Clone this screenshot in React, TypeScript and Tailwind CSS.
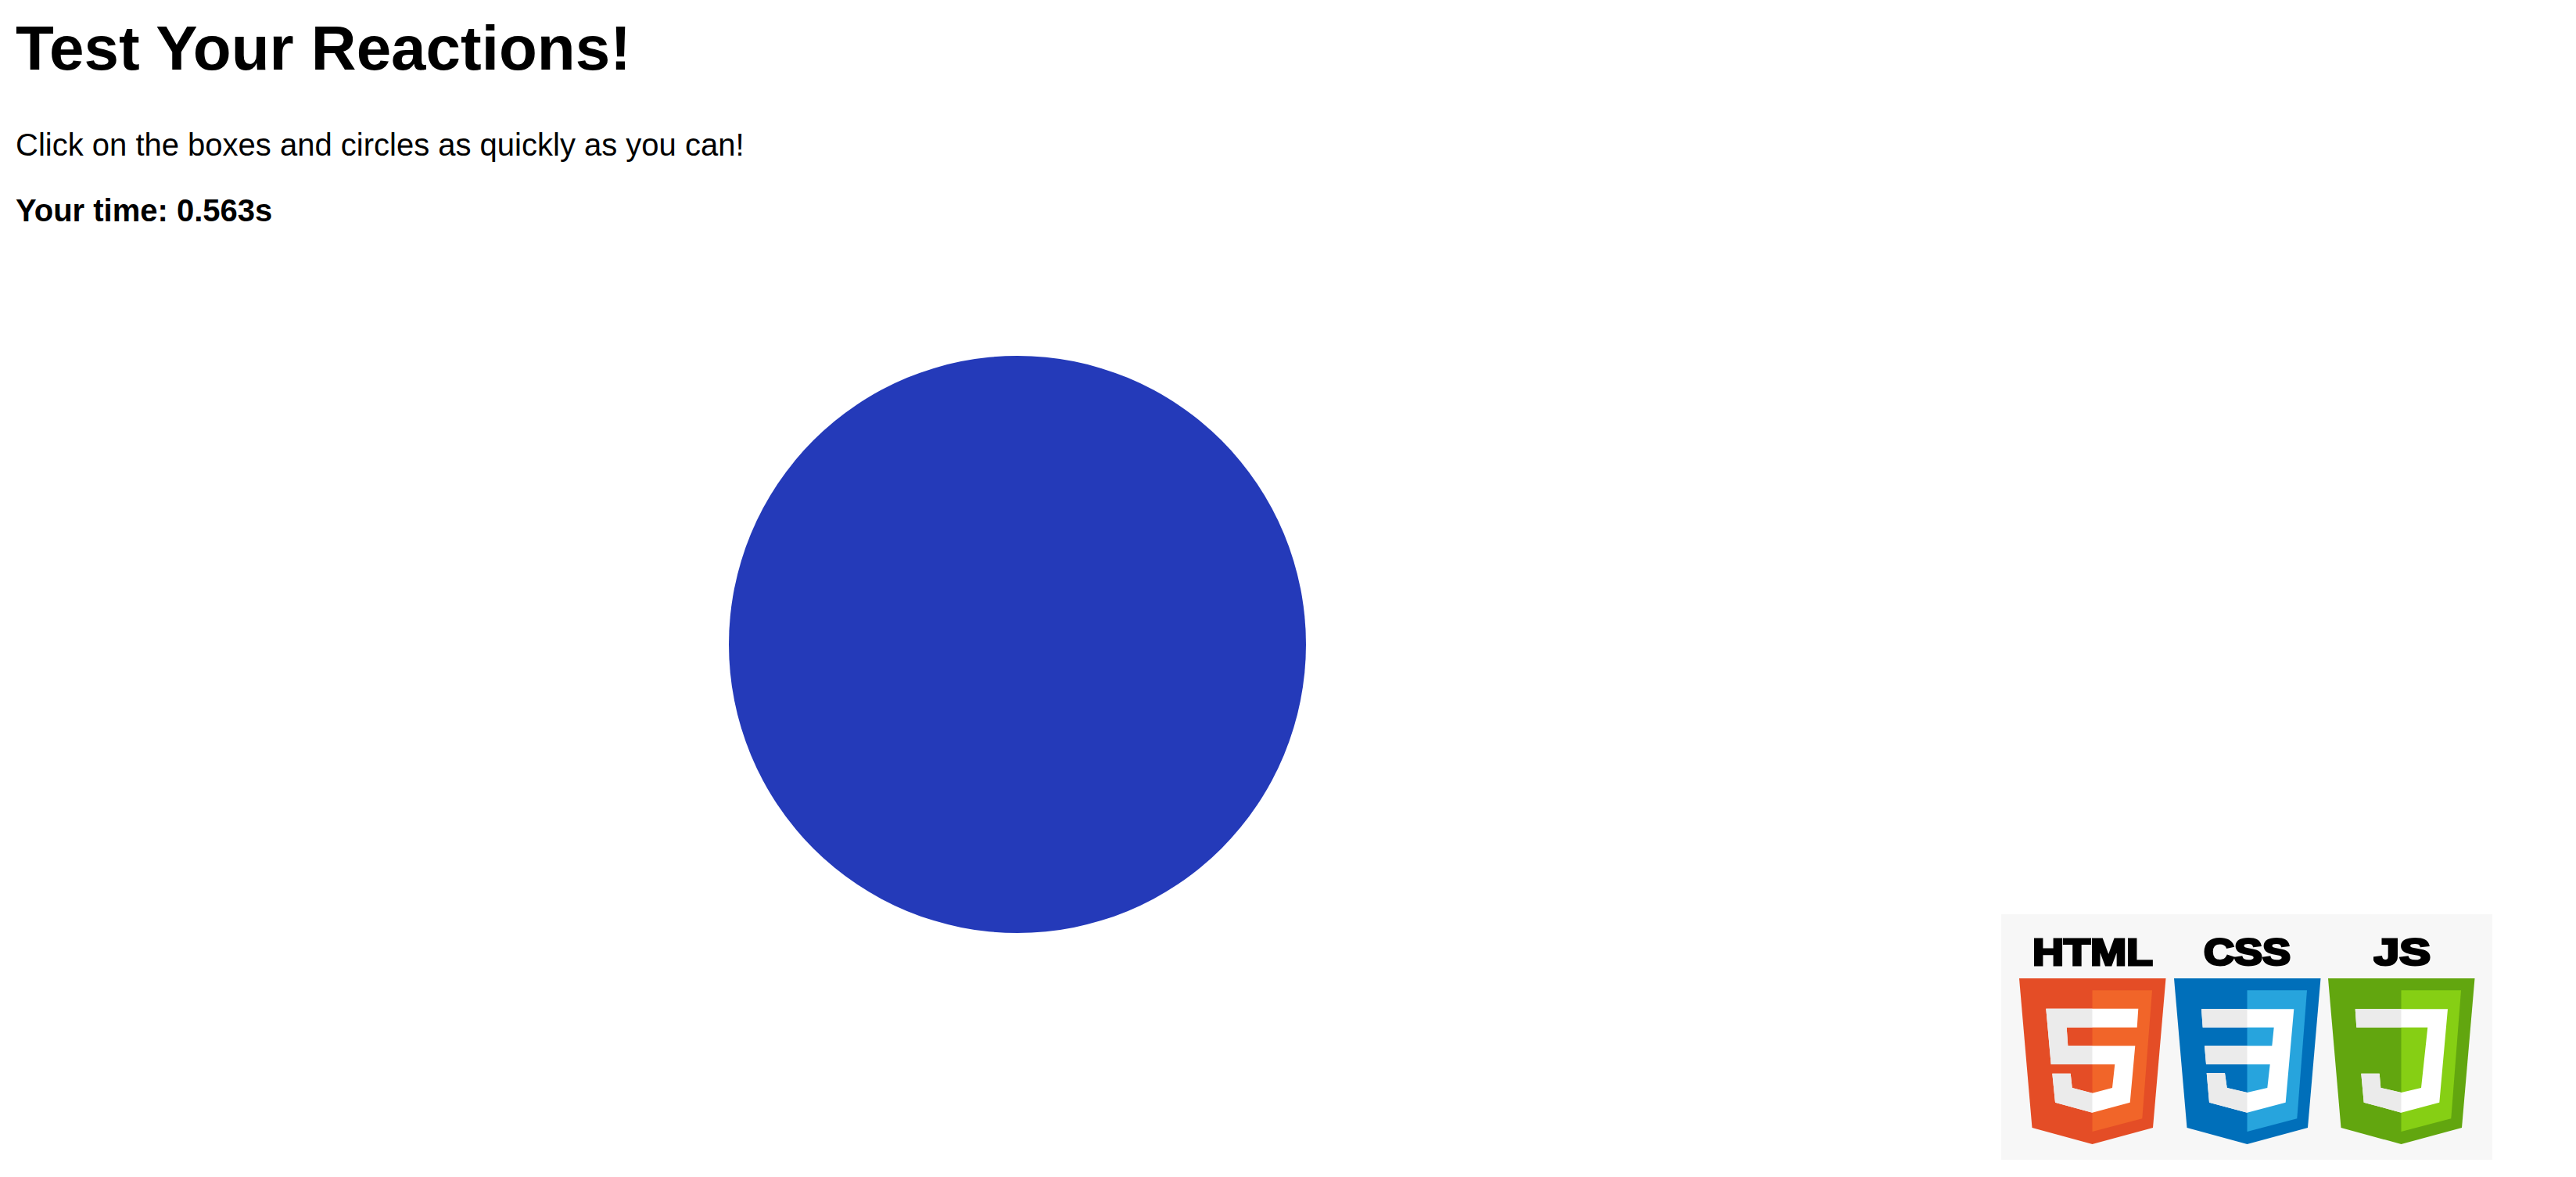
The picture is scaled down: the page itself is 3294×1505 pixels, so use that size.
const Shield = ({
  dark,
  light,
  glyph,
  shade,
}: {
  dark: string
  light: string
  glyph: string
  shade: string
}) => (
  <svg viewBox="0 0 188 212" className="w-[188px] h-[212px] block">
    <path d="M0 0H187.5L171 191L93.5 212L16.5 191Z" fill={dark} />
    <path d="M93.5 15.3H170L157.3 179.3L93.5 196Z" fill={light} />
    <path d={glyph} fill="#ffffff" />
    <path d={shade} fill="#ebebeb" />
  </svg>
)

const FIVE =
  'M34.3 38.7H152.3L150.7 62.7H60.7L62.3 86.3H148.3L141.7 158.7L93.5 171.7L46 158.7L42.3 121.7H65.7L67.7 140L93.5 146.7L119 140L122.3 110H40.7Z'
const FIVE_SHADE =
  'M34.3 38.7H93.5V62.7H60.7L62.3 86.3H93.5V110H40.7ZM42.3 121.7H65.7L67.7 140L93.5 146.7V171.7L46 158.7Z'
const THREE =
  'M35 39.3H153.3L142.7 158.7L93.5 171.7L45 158.7L41.7 121H65L67.7 140L93.5 146L119.3 140L122.7 110H41L39 86.3H125.3L127.7 62.7H36.7Z'
const THREE_SHADE =
  'M35 39.3H93.5V62.7H36.7ZM39 86.3H93.5V110H41ZM41.7 121H65L67.7 140L93.5 146V171.7L45 158.7Z'
const JAY =
  'M34.7 39.3H153L142.3 158.7L93.5 171.7L45.7 158.7L42.3 121.7H65.7L67.3 140L93.5 146L119 140L127.3 62.7H36.3Z'
const JAY_SHADE = 'M34.7 39.3H93.5V62.7H36.3ZM42.3 121.7H65.7L67.3 140L93.5 146V171.7L45.7 158.7Z'

const Logo = ({ label, textW, children }: { label: string; textW: number; children: React.ReactNode }) => (
  <div className="flex flex-col items-center w-[188px]">
    <svg viewBox={`0 0 ${textW} 54`} className="block h-[54px] mb-[6px]" style={{ width: textW }}>
      <text
        x="0"
        y="43"
        textLength={textW}
        lengthAdjust="spacingAndGlyphs"
        fontFamily="'Liberation Sans', Arial, sans-serif"
        fontWeight="700"
        fontSize="48"
        stroke="#000"
        strokeWidth="3"
        strokeLinejoin="miter"
        fill="#000"
      >
        {label}
      </text>
    </svg>
    {children}
  </div>
)

export default function App() {
  return (
    <div className="relative h-[1505px] overflow-hidden bg-white px-[20px] text-black font-['Liberation_Sans',Arial,sans-serif]">
      <h1 className="pt-[16px] text-[80px] font-bold leading-[92px]">Test Your Reactions!</h1>
      <p className="mt-[54px] text-[40px] leading-[46px]">Click on the boxes and circles as quickly as you can!</p>
      <p className="mt-[38px] text-[40px] leading-[46px] font-bold">Your time: 0.563s</p>

      <div className="absolute left-[932px] top-[455px] w-[738px] h-[738px] rounded-full bg-[#243ab9]" />

      <div className="absolute left-[2559px] top-[1169px] w-[628px] h-[314px] bg-[#f7f7f7] flex gap-[9.5px] pl-[23px] pt-[22px]">
        <Logo label="HTML" textW={154}>
          <Shield dark="#e44d26" light="#f16529" glyph={FIVE} shade={FIVE_SHADE} />
        </Logo>
        <Logo label="CSS" textW={111}>
          <Shield dark="#006fba" light="#27a4dd" glyph={THREE} shade={THREE_SHADE} />
        </Logo>
        <Logo label="JS" textW={73}>
          <Shield dark="#62a60f" light="#86cf14" glyph={JAY} shade={JAY_SHADE} />
        </Logo>
      </div>
    </div>
  )
}
